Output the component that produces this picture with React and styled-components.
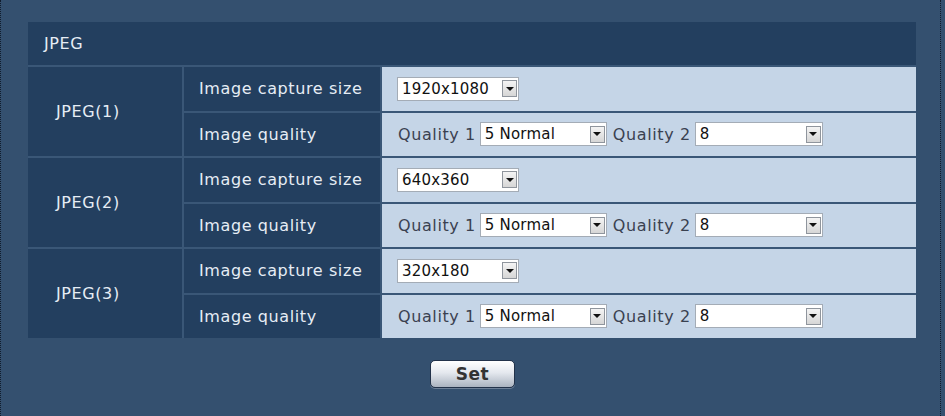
import React from 'react'
import styled, { createGlobalStyle } from 'styled-components'

const GlobalStyle = createGlobalStyle`
  html, body {
    margin: 0;
    padding: 0;
    background: #34506f;
  }
  body {
    font-family: "DejaVu Sans", Verdana, sans-serif;
  }
`

const Page = styled.div`
  width: 941px;
  height: 416px;
  box-sizing: border-box;
  background: #34506f;
  border-left: 1px dotted #101c2c;
  border-right: 1px dotted #101c2c;
  padding: 22px 0 0 27px;
  display: flex;
  flex-direction: column;
  align-items: flex-start;
`

const Panel = styled.div`
  width: 888px;
  display: grid;
  grid-template-columns: 154px 196px 1fr;
  grid-template-rows: 43px;
  grid-auto-rows: 43.5px;
  gap: 2px;
  background: #3a5777;
  font-size: 16px;
  letter-spacing: 0.6px;
`

const Header = styled.div`
  grid-column: 1 / span 3;
  background: #233f5f;
  color: #e6edf5;
  display: flex;
  align-items: center;
  padding-left: 16px;
`

const Group = styled.div`
  grid-row: span 2;
  background: #233f5f;
  color: #e6edf5;
  display: flex;
  align-items: center;
  padding-left: 28px;
`

const Label = styled.div`
  background: #233f5f;
  color: #e6edf5;
  display: flex;
  align-items: center;
  padding-left: 15px;
  white-space: nowrap;
`

const Value = styled.div`
  background: #c5d5e7;
  color: #3a4150;
  display: flex;
  align-items: center;
  padding-left: 15px;
  white-space: nowrap;
`

const Caption = styled.span`
  margin: 0 4px 0 1px;
`

const Select = styled.div`
  width: ${p => p.w}px;
  height: 24px;
  box-sizing: border-box;
  background: #fff;
  border: 1px solid #a4acb6;
  display: flex;
  align-items: center;
  justify-content: space-between;
  padding: 0 1px 0 4px;
  color: #111;
  font-size: 15px;
  letter-spacing: 0.2px;
  margin-right: 5px;
`

const Arrow = styled.span`
  width: 15px;
  height: 17px;
  box-sizing: border-box;
  border: 1px solid #8f959d;
  background: linear-gradient(#f4f4f4, #d6d6d6);
  display: flex;
  align-items: center;
  justify-content: center;
  &::after {
    content: '';
    border-left: 4px solid transparent;
    border-right: 4px solid transparent;
    border-top: 4px solid #111;
  }
`

const Footer = styled.div`
  width: 888px;
  display: flex;
  justify-content: center;
  padding-top: 22px;
`

const SetButton = styled.button`
  width: 85px;
  height: 28px;
  border: 1px solid #22324a;
  border-radius: 5px;
  background: linear-gradient(#ffffff 0%, #e4e8ee 45%, #aab3c0 100%);
  color: #333;
  font-family: "DejaVu Sans", Verdana, sans-serif;
  font-weight: bold;
  font-size: 17px;
  letter-spacing: 0.5px;
  padding: 0;
  margin-left: 1px;
  box-shadow: 0 1px 0 #6c7f97;
`

const Dropdown = ({ value, w }) => (
  <Select w={w}>
    <span>{value}</span>
    <Arrow />
  </Select>
)

const streams = [
  { name: 'JPEG(1)', size: '1920x1080' },
  { name: 'JPEG(2)', size: '640x360' },
  { name: 'JPEG(3)', size: '320x180' }
]

const App = () => (
  <>
    <GlobalStyle />
    <Page>
      <Panel>
        <Header>JPEG</Header>
        {streams.map(s => (
          <React.Fragment key={s.name}>
            <Group>{s.name}</Group>
            <Label>Image capture size</Label>
            <Value>
              <Dropdown value={s.size} w={122} />
            </Value>
            <Label>Image quality</Label>
            <Value>
              <Caption>Quality 1</Caption>
              <Dropdown value='5 Normal' w={127} />
              <Caption>Quality 2</Caption>
              <Dropdown value='8' w={128} />
            </Value>
          </React.Fragment>
        ))}
      </Panel>
      <Footer>
        <SetButton>Set</SetButton>
      </Footer>
    </Page>
  </>
)

export default App
